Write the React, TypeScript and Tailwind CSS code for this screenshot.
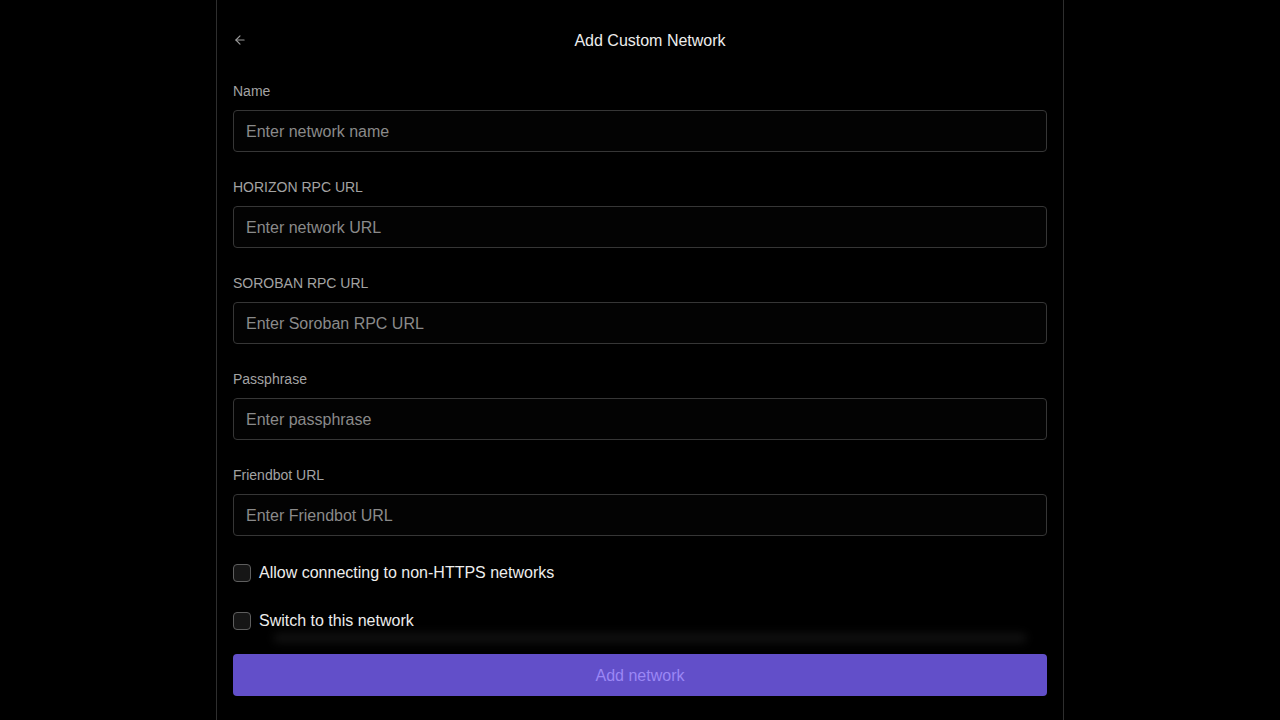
import React from "react";

const fields = [
  { label: "Name", placeholder: "Enter network name" },
  { label: "HORIZON RPC URL", placeholder: "Enter network URL" },
  { label: "SOROBAN RPC URL", placeholder: "Enter Soroban RPC URL" },
  { label: "Passphrase", placeholder: "Enter passphrase" },
  { label: "Friendbot URL", placeholder: "Enter Friendbot URL" },
];

function Check({ label }: { label: string }) {
  return (
    <label className="flex items-center h-[18px] gap-2">
      <span className="w-[18px] h-[18px] rounded-[4px] border border-[#5e5e5e] bg-[#161616] shrink-0" />
      <span className="text-[16px] text-[#ededed] leading-5">{label}</span>
    </label>
  );
}

export default function App() {
  return (
    <div
      className="w-full h-[720px] bg-black flex justify-center overflow-hidden"
      style={{ fontFamily: '"Liberation Sans", Arial, sans-serif' }}
    >
      <div className="w-[848px] h-full border-x border-[#2e2e2e] bg-black flex flex-col px-4">
        <div className="h-[81px] shrink-0 flex items-start pt-[30px]">
          <div className="w-5 h-5 flex items-center text-[#9a9a9a] shrink-0">
            <svg width="14" height="14" viewBox="0 0 24 24" fill="none" stroke="currentColor" strokeWidth="2" strokeLinecap="round" strokeLinejoin="round">
              <path d="M19 12H5" />
              <path d="M12 19l-7-7 7-7" />
            </svg>
          </div>
          <div className="flex-1 text-center text-[16px] text-[#ededed] leading-5 pt-[1px]">
            Add Custom Network
          </div>
        </div>
        <div className="flex flex-col gap-[25px]">
          {fields.map((f) => (
            <div key={f.label} className="flex flex-col">
              <div className="h-5 leading-5 text-[14px] text-[#a3a3a3] mb-[9px]">{f.label}</div>
              <div className="h-[42px] rounded-[4px] border border-[#363636] bg-[#030303] flex items-center px-3 pt-[2px]">
                <span className="text-[16px] text-[#8a8a8a]">{f.placeholder}</span>
              </div>
            </div>
          ))}
        </div>
        <div className="flex flex-col gap-[30px] mt-[28px]">
          <Check label="Allow connecting to non-HTTPS networks" />
          <Check label="Switch to this network" />
        </div>
        <div className="relative mt-[24px]">
          <div className="absolute left-[40px] right-[20px] -top-[21px] h-[10px] rounded-full bg-[#101010] blur-[4px]" />
          <div className="relative h-[42px] rounded-[4px] bg-[#624fc9] flex items-center justify-center pt-[2px]">
            <span className="text-[16px] text-[#9b87f5]">Add network</span>
          </div>
        </div>
      </div>
    </div>
  );
}
